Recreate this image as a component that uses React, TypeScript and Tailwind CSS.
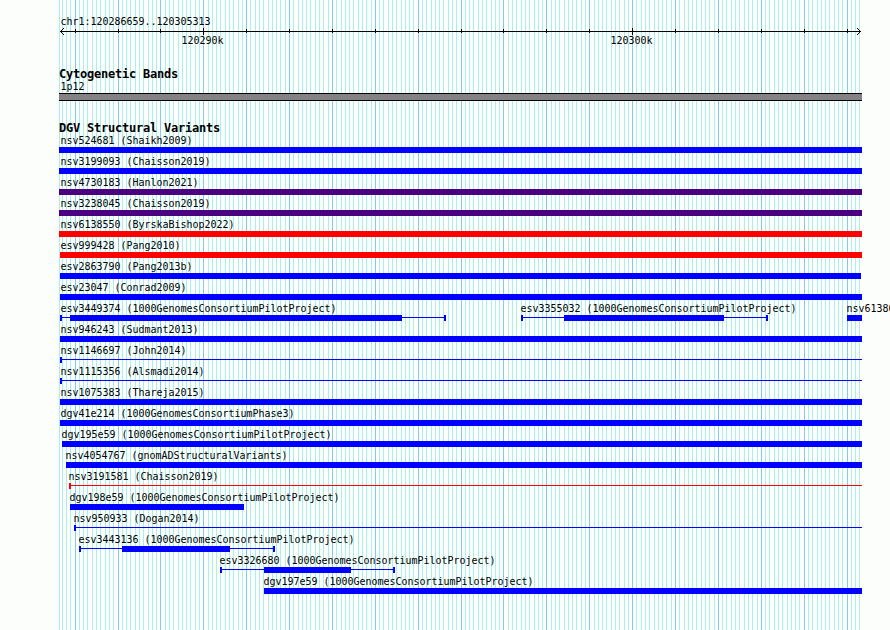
import React from "react";

const ORIGIN = 75.124;
const STEP = 42.8862;

const gridLines: { x: number; major: boolean }[] = [{ x: 59, major: false }];
for (let i = -3; i <= 183; i++) {
  gridLines.push({ x: Math.floor(ORIGIN + (i * STEP) / 10), major: i % 10 === 0 });
}
const majors = gridLines.filter((l) => l.major).map((l) => l.x);

type Color = "blue" | "purple" | "red";

type Feature = {
  name: string;
  x: number;
  text: number;
  end: number;
  color?: Color;
  blocks?: [number, number][];
  caps?: number[];
};

const fills: Record<Color, string> = {
  blue: "fill-[#0000ff]",
  purple: "fill-[#4b0082]",
  red: "fill-[#ff0000]",
};

const rows: Feature[][] = [
  [{ name: "nsv524681 (Shaikh2009)", x: 59, text: 60, end: 862 }],
  [{ name: "nsv3199093 (Chaisson2019)", x: 59, text: 60, end: 862 }],
  [{ name: "nsv4730183 (Hanlon2021)", x: 59, text: 60, end: 862, color: "purple" }],
  [{ name: "nsv3238045 (Chaisson2019)", x: 59, text: 60, end: 862, color: "purple" }],
  [{ name: "nsv6138550 (ByrskaBishop2022)", x: 59, text: 60, end: 862, color: "red" }],
  [{ name: "esv999428 (Pang2010)", x: 60, text: 60, end: 862, color: "red" }],
  [{ name: "esv2863790 (Pang2013b)", x: 60, text: 60, end: 861 }],
  [{ name: "esv23047 (Conrad2009)", x: 60, text: 60, end: 862 }],
  [
    { name: "esv3449374 (1000GenomesConsortiumPilotProject)", x: 60, text: 60, end: 446, blocks: [[70, 402]], caps: [60, 444] },
    { name: "esv3355032 (1000GenomesConsortiumPilotProject)", x: 521, text: 520, end: 768, blocks: [[564, 724]], caps: [521, 766] },
    { name: "nsv6138060", x: 847, text: 846, end: 862 },
  ],
  [{ name: "nsv946243 (Sudmant2013)", x: 60, text: 60, end: 862 }],
  [{ name: "nsv1146697 (John2014)", x: 60, text: 60, end: 862, blocks: [], caps: [60] }],
  [{ name: "nsv1115356 (Alsmadi2014)", x: 60, text: 60, end: 862, blocks: [], caps: [60] }],
  [{ name: "nsv1075383 (Thareja2015)", x: 60, text: 60, end: 862 }],
  [{ name: "dgv41e214 (1000GenomesConsortiumPhase3)", x: 60, text: 60, end: 862 }],
  [{ name: "dgv195e59 (1000GenomesConsortiumPilotProject)", x: 62, text: 61, end: 862 }],
  [{ name: "nsv4054767 (gnomADStructuralVariants)", x: 66, text: 65, end: 862 }],
  [{ name: "nsv3191581 (Chaisson2019)", x: 69, text: 68, end: 862, color: "red", blocks: [], caps: [69] }],
  [{ name: "dgv198e59 (1000GenomesConsortiumPilotProject)", x: 70, text: 69, end: 244 }],
  [{ name: "nsv950933 (Dogan2014)", x: 74, text: 73, end: 862, blocks: [], caps: [74] }],
  [{ name: "esv3443136 (1000GenomesConsortiumPilotProject)", x: 79, text: 78, end: 275, blocks: [[122, 230]], caps: [79, 273] }],
  [{ name: "esv3326680 (1000GenomesConsortiumPilotProject)", x: 220, text: 219, end: 395, blocks: [[264, 351]], caps: [220, 393] }],
  [{ name: "dgv197e59 (1000GenomesConsortiumPilotProject)", x: 264, text: 263, end: 862 }],
];

function Label({ children }: { children: React.ReactNode }) {
  return (
    <span className="block w-max origin-left scale-x-[0.906] whitespace-pre pl-[0.5px] text-[11px] leading-[14px]">
      {children}
    </span>
  );
}

function Heading({ children }: { children: React.ReactNode }) {
  return (
    <h2 className="ml-[59px] h-[12px] whitespace-pre text-[12px] leading-[12px] font-bold tracking-[-0.224px]">
      {children}
    </h2>
  );
}

function Glyph({ f }: { f: Feature }) {
  const blocks = f.blocks ?? [[f.x, f.end]];
  return (
    <g className={fills[f.color ?? "blue"]}>
      <rect x={f.x} y={2} width={f.end - f.x} height={1} />
      {blocks.map(([a, b]) => (
        <rect key={a} x={a} y={0} width={b - a} height={6} />
      ))}
      {(f.caps ?? []).map((c) => (
        <rect key={c} x={c} y={0} width={2} height={6} />
      ))}
    </g>
  );
}

/* Every feature of a row shares one grid cell and is offset by its own margin. */
function TrackRow({ features }: { features: Feature[] }) {
  return (
    <div className="grid h-[21px] w-[890px] grid-cols-[890px]">
      {features.map((f) => (
        <div key={f.name} className="col-start-1 row-start-1">
          <div className="h-[13px]" style={{ marginLeft: f.text }}>
            <Label>{f.name}</Label>
          </div>
          <svg className="block h-[6px] w-[890px]" shapeRendering="crispEdges">
            <Glyph f={f} />
          </svg>
        </div>
      ))}
    </div>
  );
}

export default function App() {
  return (
    <main className="relative h-[630px] w-[890px] overflow-hidden bg-[#fcfefc] font-['DejaVu_Sans_Mono',monospace] text-black">
      <svg className="absolute inset-0 h-[630px] w-[890px]" shapeRendering="crispEdges">
        {gridLines.map((l) => (
          <rect key={l.x} x={l.x} y={0} width={1} height={630} className={l.major ? "fill-[#84caec]" : "fill-[#aceeec]"} />
        ))}
      </svg>
      <div className="relative flex flex-col">
        <header className="h-[67px] pt-[15px]">
          <div className="ml-[60px] h-[12px]">
            <Label>chr1:120286659..120305313</Label>
          </div>
          <svg className="block h-[8px] w-[890px] fill-none stroke-black" shapeRendering="crispEdges">
            <path d="M60 4.5H861" />
            {majors.map((x) => (
              <path key={x} d={x === 203 || x === 631 || x === 632 ? `M${x + 0.5} 1V8` : `M${x + 0.5} 2V6`} />
            ))}
            <path d="M63.5 1v1M62.5 2v1M61.5 3v1M60.5 4v1M61.5 5v1M62.5 6v1M63.5 7v1" />
            <path d="M857.5 1v1M858.5 2v1M859.5 3v1M860.5 4v1M859.5 5v1M858.5 6v1M857.5 7v1" />
          </svg>
          <div className="-mt-[1px] flex">
            <div className="ml-[181px] w-[429px]">
              <Label>120290k</Label>
            </div>
            <Label>120300k</Label>
          </div>
        </header>
        <section className="h-[54px] pt-[1px]">
          <Heading>Cytogenetic Bands</Heading>
          <div className="ml-[60px] h-[13px]">
            <Label>1p12</Label>
          </div>
          <div className="ml-[59px] h-[8px] w-[803px] border-y border-black bg-[#848284]" />
        </section>
        <section className="pt-[1px]">
          <Heading>DGV Structural Variants</Heading>
          {rows.map((r) => (
            <TrackRow key={r[0].name} features={r} />
          ))}
        </section>
      </div>
    </main>
  );
}
